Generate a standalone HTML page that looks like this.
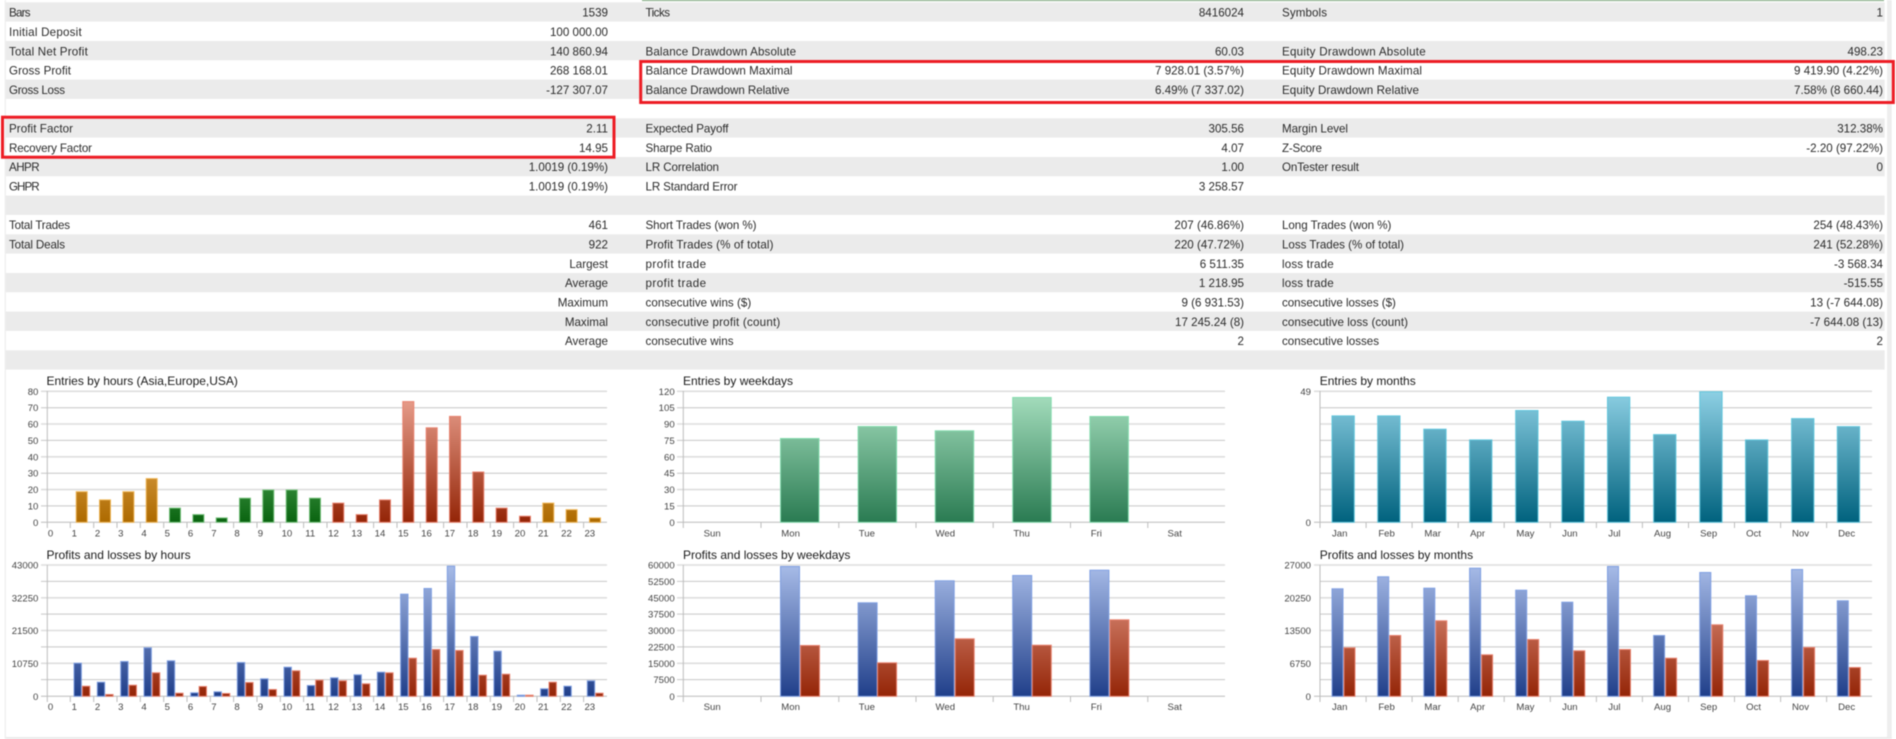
<!DOCTYPE html>
<html><head><meta charset="utf-8"><title>Report</title>
<style>
html,body{margin:0;padding:0;background:#fff;width:1896px;height:739px;overflow:hidden}
svg{display:block;filter:blur(.4px)}
.t text{font:11.6px "Liberation Sans",Arial,sans-serif;fill:#2b2b2b}
.t .r{text-anchor:end}
.h{font:12px "Liberation Sans",Arial,sans-serif;fill:#1a1a1a}
.a text{font:9.6px "Liberation Sans",Arial,sans-serif;fill:#444}
.a .r{text-anchor:end}
.a .c{text-anchor:middle}
.g1{stroke:#c6c6c6;stroke-width:1;fill:none}
.g2{stroke:#dedede;stroke-width:1.6;fill:none}
.ax{stroke:#bcbcbc;stroke-width:1;fill:none}
</style></head><body>
<svg width="1896" height="739" viewBox="0 0 1896 739" xmlns="http://www.w3.org/2000/svg">
<defs>
<linearGradient id="go" gradientUnits="userSpaceOnUse" x1="0" y1="391" x2="0" y2="522"><stop offset="0" stop-color="#ffc87d"/><stop offset="1" stop-color="#ad6a00"/></linearGradient>
<linearGradient id="gg" gradientUnits="userSpaceOnUse" x1="0" y1="391" x2="0" y2="522"><stop offset="0" stop-color="#90e098"/><stop offset="1" stop-color="#0a6410"/></linearGradient>
<linearGradient id="gr" gradientUnits="userSpaceOnUse" x1="0" y1="391" x2="0" y2="522"><stop offset="0" stop-color="#eca594"/><stop offset="1" stop-color="#942507"/></linearGradient>
<linearGradient id="gs" gradientUnits="userSpaceOnUse" x1="0" y1="391" x2="0" y2="522"><stop offset="0" stop-color="#a8e0c0"/><stop offset="1" stop-color="#2a7b52"/></linearGradient>
<linearGradient id="gc" gradientUnits="userSpaceOnUse" x1="0" y1="391" x2="0" y2="522"><stop offset="0" stop-color="#8ed0e4"/><stop offset="1" stop-color="#00627e"/></linearGradient>
<linearGradient id="gb" gradientUnits="userSpaceOnUse" x1="0" y1="565" x2="0" y2="696"><stop offset="0" stop-color="#a8bce8"/><stop offset="1" stop-color="#203f8a"/></linearGradient>
<linearGradient id="gd" gradientUnits="userSpaceOnUse" x1="0" y1="565" x2="0" y2="696"><stop offset="0" stop-color="#eca594"/><stop offset="1" stop-color="#942507"/></linearGradient>
</defs>

<!-- frame -->
<rect x="4.8" y="0" width="1" height="739" fill="#ececec"/>
<rect x="1887" y="0" width="4.7" height="739" fill="#eeeeee"/>
<rect x="5.7" y="737" width="1886" height="2" fill="#ebebeb"/>
<rect x="642" y="0" width="1242" height="1" fill="#76a276"/>

<!-- table rows -->
<g fill="#ebebeb">
<rect x="5.7" y="2.3" width="1879" height="19.3"/>
<rect x="5.7" y="41" width="1879" height="19.3"/>
<rect x="5.7" y="79.6" width="1879" height="19.3"/>
<rect x="5.7" y="118.3" width="1879" height="19.3"/>
<rect x="5.7" y="157" width="1879" height="19.3"/>
<rect x="5.7" y="195.6" width="1879" height="19.3"/>
<rect x="5.7" y="234.3" width="1879" height="19.3"/>
<rect x="5.7" y="273" width="1879" height="19.3"/>
<rect x="5.7" y="311.6" width="1879" height="19.3"/>
<rect x="5.7" y="350.3" width="1879" height="19.3"/>
</g>

<g class="t">
<text x="9" y="16.6" textLength="21.6">Bars</text><text class="r" x="608" y="16.6">1539</text>
<text x="645.5" y="16.6" textLength="24.5">Ticks</text><text class="r" x="1244" y="16.6">8416024</text>
<text x="1282" y="16.6" textLength="45">Symbols</text><text class="r" x="1883" y="16.6">1</text>
<text x="9" y="35.9" textLength="72.7">Initial Deposit</text><text class="r" x="608" y="35.9">100 000.00</text>
<text x="9" y="55.3" textLength="78.8">Total Net Profit</text><text class="r" x="608" y="55.3">140 860.94</text>
<text x="645.5" y="55.3" textLength="150.6">Balance Drawdown Absolute</text><text class="r" x="1244" y="55.3">60.03</text>
<text x="1282" y="55.3" textLength="143.7">Equity Drawdown Absolute</text><text class="r" x="1883" y="55.3">498.23</text>
<text x="9" y="74.6" textLength="62">Gross Profit</text><text class="r" x="608" y="74.6">268 168.01</text>
<text x="645.5" y="74.6" textLength="147">Balance Drawdown Maximal</text><text class="r" x="1244" y="74.6">7 928.01 (3.57%)</text>
<text x="1282" y="74.6" textLength="140">Equity Drawdown Maximal</text><text class="r" x="1883" y="74.6">9 419.90 (4.22%)</text>
<text x="9" y="93.9" textLength="56">Gross Loss</text><text class="r" x="608" y="93.9">-127 307.07</text>
<text x="645.5" y="93.9" textLength="144">Balance Drawdown Relative</text><text class="r" x="1244" y="93.9">6.49% (7 337.02)</text>
<text x="1282" y="93.9" textLength="137">Equity Drawdown Relative</text><text class="r" x="1883" y="93.9">7.58% (8 660.44)</text>
<text x="9" y="132.6" textLength="64">Profit Factor</text><text class="r" x="608" y="132.6">2.11</text>
<text x="645.5" y="132.6" textLength="83">Expected Payoff</text><text class="r" x="1244" y="132.6">305.56</text>
<text x="1282" y="132.6" textLength="66">Margin Level</text><text class="r" x="1883" y="132.6">312.38%</text>
<text x="9" y="151.9" textLength="83">Recovery Factor</text><text class="r" x="608" y="151.9">14.95</text>
<text x="645.5" y="151.9" textLength="66.5">Sharpe Ratio</text><text class="r" x="1244" y="151.9">4.07</text>
<text x="1282" y="151.9" textLength="40">Z-Score</text><text class="r" x="1883" y="151.9">-2.20 (97.22%)</text>
<text x="9" y="171.2" textLength="30.6">AHPR</text><text class="r" x="608" y="171.2">1.0019 (0.19%)</text>
<text x="645.5" y="171.2" textLength="73.5">LR Correlation</text><text class="r" x="1244" y="171.2">1.00</text>
<text x="1282" y="171.2" textLength="77">OnTester result</text><text class="r" x="1883" y="171.2">0</text>
<text x="9" y="190.6" textLength="30.6">GHPR</text><text class="r" x="608" y="190.6">1.0019 (0.19%)</text>
<text x="645.5" y="190.6" textLength="92">LR Standard Error</text><text class="r" x="1244" y="190.6">3 258.57</text>
<text x="9" y="229.2" textLength="61">Total Trades</text><text class="r" x="608" y="229.2">461</text>
<text x="645.5" y="229.2" textLength="111">Short Trades (won %)</text><text class="r" x="1244" y="229.2">207 (46.86%)</text>
<text x="1282" y="229.2" textLength="109.4">Long Trades (won %)</text><text class="r" x="1883" y="229.2">254 (48.43%)</text>
<text x="9" y="248.6" textLength="56">Total Deals</text><text class="r" x="608" y="248.6">922</text>
<text x="645.5" y="248.6" textLength="128">Profit Trades (% of total)</text><text class="r" x="1244" y="248.6">220 (47.72%)</text>
<text x="1282" y="248.6" textLength="122">Loss Trades (% of total)</text><text class="r" x="1883" y="248.6">241 (52.28%)</text>
<text class="r" x="608" y="267.9">Largest</text>
<text x="645.5" y="267.9" textLength="60.6">profit trade</text><text class="r" x="1244" y="267.9">6 511.35</text>
<text x="1282" y="267.9" textLength="51.7">loss trade</text><text class="r" x="1883" y="267.9">-3 568.34</text>
<text class="r" x="608" y="287.2">Average</text>
<text x="645.5" y="287.2" textLength="60.6">profit trade</text><text class="r" x="1244" y="287.2">1 218.95</text>
<text x="1282" y="287.2" textLength="51.7">loss trade</text><text class="r" x="1883" y="287.2">-515.55</text>
<text class="r" x="608" y="306.6">Maximum</text>
<text x="645.5" y="306.6" textLength="105.8">consecutive wins ($)</text><text class="r" x="1244" y="306.6">9 (6 931.53)</text>
<text x="1282" y="306.6" textLength="113.9">consecutive losses ($)</text><text class="r" x="1883" y="306.6">13 (-7 644.08)</text>
<text class="r" x="608" y="325.9">Maximal</text>
<text x="645.5" y="325.9" textLength="134.8">consecutive profit (count)</text><text class="r" x="1244" y="325.9">17 245.24 (8)</text>
<text x="1282" y="325.9" textLength="126">consecutive loss (count)</text><text class="r" x="1883" y="325.9">-7 644.08 (13)</text>
<text class="r" x="608" y="345.2">Average</text>
<text x="645.5" y="345.2" textLength="88">consecutive wins</text><text class="r" x="1244" y="345.2">2</text>
<text x="1282" y="345.2" textLength="97">consecutive losses</text><text class="r" x="1883" y="345.2">2</text>
</g>

<!-- red highlight boxes -->
<rect x="2.5" y="117.2" width="611.5" height="40" fill="none" stroke="#ed1c24" stroke-width="3"/>
<rect x="640.7" y="61.5" width="1252.6" height="41" fill="none" stroke="#ed1c24" stroke-width="3"/>

<!-- grids: upper row -->
<path class="g2" d="M41 391.3H607M41 424H607M41 456.8H607M41 489.6H607"/>
<path class="g1" d="M41 407.7H607M41 440.4H607M41 473.2H607M41 505.9H607"/>
<path class="ax" d="M47.3 391V528M41 522.3H607M70.3 522V528M93.7 522V528M117 522V528M140.3 522V528M163.7 522V528M187 522V528M210.3 522V528M233.6 522V528M257 522V528M280.3 522V528M303.6 522V528M327 522V528M350.3 522V528M373.6 522V528M397 522V528M420.3 522V528M443.6 522V528M467 522V528M490.3 522V528M513.6 522V528M537 522V528M560.3 522V528M583.6 522V528"/>

<path class="g2" d="M677 391.3H1225M677 424H1225M677 456.8H1225M677 489.6H1225"/>
<path class="g1" d="M677 407.7H1225M677 440.4H1225M677 473.2H1225M677 505.9H1225"/>
<path class="ax" d="M683.3 391V528M677 522.3H1225M761 522V528M838.8 522V528M916 522V528M993.2 522V528M1070.5 522V528M1147.8 522V528"/>

<path class="g2" d="M1314 391.3H1872M1320 424H1872M1320 456.8H1872M1320 489.6H1872"/>
<path class="g1" d="M1320 407.7H1872M1320 440.4H1872M1320 473.2H1872M1320 505.9H1872"/>
<path class="ax" d="M1320 391V528M1314 522.3H1872M1366.1 522V528M1412.1 522V528M1458.2 522V528M1504.2 522V528M1550.3 522V528M1596.4 522V528M1642.4 522V528M1688.5 522V528M1734.5 522V528M1780.6 522V528M1826.6 522V528"/>

<!-- grids: lower row -->
<path class="g2" d="M41 565H607M41 597.8H607M41 630.5H607M41 663.3H607"/>
<path class="g1" d="M41 581.4H607M41 614.1H607M41 646.9H607M41 679.6H607"/>
<path class="ax" d="M47.3 565V702M41 696.3H607M70.3 696V702M93.7 696V702M117 696V702M140.3 696V702M163.7 696V702M187 696V702M210.3 696V702M233.6 696V702M257 696V702M280.3 696V702M303.6 696V702M327 696V702M350.3 696V702M373.6 696V702M397 696V702M420.3 696V702M443.6 696V702M467 696V702M490.3 696V702M513.6 696V702M537 696V702M560.3 696V702M583.6 696V702"/>

<path class="g2" d="M677 565H1225M677 597.8H1225M677 630.5H1225M677 663.3H1225"/>
<path class="g1" d="M677 581.4H1225M677 614.1H1225M677 646.9H1225M677 679.6H1225"/>
<path class="ax" d="M683.3 565V702M677 696.3H1225M761 696V702M838.8 696V702M916 696V702M993.2 696V702M1070.5 696V702M1147.8 696V702"/>

<path class="g2" d="M1314 565H1872M1320 597.8H1872M1320 630.5H1872M1320 663.3H1872"/>
<path class="g1" d="M1320 581.4H1872M1320 614.1H1872M1320 646.9H1872M1320 679.6H1872"/>
<path class="ax" d="M1320 565V702M1314 696.3H1872M1366.1 696V702M1412.1 696V702M1458.2 696V702M1504.2 696V702M1550.3 696V702M1596.4 696V702M1642.4 696V702M1688.5 696V702M1734.5 696V702M1780.6 696V702M1826.6 696V702"/>

<!-- Entries by hours bars -->
<g fill="url(#go)" stroke="#eeb555">
<rect x="76.2" y="491.7" width="11" height="30.6"/>
<rect x="99.5" y="499.9" width="11" height="22.4"/>
<rect x="122.9" y="491.7" width="11" height="30.6"/>
<rect x="146.2" y="478.6" width="11" height="43.7"/>
<rect x="542.8" y="503.1" width="11" height="19.2"/>
<rect x="566.1" y="509.7" width="11" height="12.6"/>
<rect x="589.5" y="517.9" width="11" height="4.4"/>
</g>
<g fill="url(#gg)" stroke="#74c07a">
<rect x="169.5" y="508.1" width="11" height="14.2"/>
<rect x="192.9" y="514.6" width="11" height="7.7"/>
<rect x="216.2" y="517.9" width="11" height="4.4"/>
<rect x="239.5" y="498.2" width="11" height="24.1"/>
<rect x="262.8" y="490" width="11" height="32.3"/>
<rect x="286.2" y="490" width="11" height="32.3"/>
<rect x="309.5" y="498.2" width="11" height="24.1"/>
</g>
<g fill="url(#gr)" stroke="#e8826f">
<rect x="332.8" y="503.1" width="11" height="19.2"/>
<rect x="356.2" y="514.6" width="11" height="7.7"/>
<rect x="379.5" y="499.9" width="11" height="22.4"/>
<rect x="402.8" y="401.6" width="11" height="120.7"/>
<rect x="426.2" y="427.8" width="11" height="94.5"/>
<rect x="449.5" y="416.4" width="11" height="105.9"/>
<rect x="472.8" y="472" width="11" height="50.3"/>
<rect x="496.1" y="508.1" width="11" height="14.2"/>
<rect x="519.5" y="516.2" width="11" height="6.1"/>
</g>

<!-- Entries by weekdays bars -->
<g fill="url(#gs)" stroke="#84dcae">
<rect x="780.5" y="438.5" width="38.5" height="83.8"/>
<rect x="858.1" y="426.5" width="38.5" height="95.8"/>
<rect x="935.2" y="430.8" width="38.5" height="91.5"/>
<rect x="1012.7" y="397.5" width="38.5" height="124.8"/>
<rect x="1089.9" y="416.5" width="38.5" height="105.8"/>
</g>

<!-- Entries by months bars -->
<g fill="url(#gc)" stroke="#62c6dc">
<rect x="1332" y="415.9" width="22.3" height="106.4"/>
<rect x="1377.7" y="415.9" width="22.3" height="106.4"/>
<rect x="1423.8" y="429.2" width="22.3" height="93.1"/>
<rect x="1469.6" y="439.9" width="22.3" height="82.4"/>
<rect x="1515.7" y="410.5" width="22.3" height="111.8"/>
<rect x="1561.8" y="421.2" width="22.3" height="101.1"/>
<rect x="1607.5" y="397.2" width="22.3" height="125.1"/>
<rect x="1653.6" y="434.6" width="22.3" height="87.7"/>
<rect x="1699.8" y="391.8" width="22.3" height="130.5"/>
<rect x="1745.5" y="439.9" width="22.3" height="82.4"/>
<rect x="1791.6" y="418.6" width="22.3" height="103.7"/>
<rect x="1837.3" y="426.6" width="22.3" height="95.7"/>
</g>

<!-- P&L by hours blue -->
<g fill="url(#gb)" stroke="#7f9fe2">
<rect x="74" y="663.2" width="7.4" height="33.1"/>
<rect x="97.3" y="682.2" width="7.4" height="14.1"/>
<rect x="120.7" y="661.5" width="7.4" height="34.8"/>
<rect x="144" y="647.8" width="7.4" height="48.5"/>
<rect x="167.3" y="660.8" width="7.4" height="35.5"/>
<rect x="190.7" y="692.8" width="7.4" height="3.5"/>
<rect x="214" y="691.8" width="7.4" height="4.5"/>
<rect x="237.3" y="662.5" width="7.4" height="33.8"/>
<rect x="260.6" y="678.8" width="7.4" height="17.5"/>
<rect x="284" y="667.2" width="7.4" height="29.1"/>
<rect x="307.3" y="685.5" width="7.4" height="10.8"/>
<rect x="330.6" y="677.8" width="7.4" height="18.5"/>
<rect x="354" y="674.8" width="7.4" height="21.5"/>
<rect x="377.3" y="672.2" width="7.4" height="24.1"/>
<rect x="400.6" y="594.2" width="7.4" height="102.1"/>
<rect x="424" y="588.5" width="7.4" height="107.8"/>
<rect x="447.3" y="566.2" width="7.4" height="130.1"/>
<rect x="470.6" y="636.5" width="7.4" height="59.8"/>
<rect x="493.9" y="651.2" width="7.4" height="45.1"/>
<rect x="517.3" y="695.2" width="7.4" height="1.1"/>
<rect x="540.6" y="688.8" width="7.4" height="7.5"/>
<rect x="563.9" y="686.2" width="7.4" height="10.1"/>
<rect x="587.3" y="680.8" width="7.4" height="15.5"/>
</g>
<!-- P&L by hours red -->
<g fill="url(#gd)" stroke="#e8826f">
<rect x="82.4" y="686.2" width="7.4" height="10.1"/>
<rect x="105.7" y="694.5" width="7.4" height="1.8"/>
<rect x="129.1" y="685.2" width="7.4" height="11.1"/>
<rect x="152.4" y="672.8" width="7.4" height="23.5"/>
<rect x="175.7" y="693.2" width="7.4" height="3.1"/>
<rect x="199.1" y="686.5" width="7.4" height="9.8"/>
<rect x="222.4" y="693.5" width="7.4" height="2.8"/>
<rect x="245.7" y="682.5" width="7.4" height="13.8"/>
<rect x="269" y="689.5" width="7.4" height="6.8"/>
<rect x="292.4" y="670.8" width="7.4" height="25.5"/>
<rect x="315.7" y="680.2" width="7.4" height="16.1"/>
<rect x="339" y="680.8" width="7.4" height="15.5"/>
<rect x="362.4" y="683.8" width="7.4" height="12.5"/>
<rect x="385.7" y="672.8" width="7.4" height="23.5"/>
<rect x="409" y="658.2" width="7.4" height="38.1"/>
<rect x="432.4" y="649.5" width="7.4" height="46.8"/>
<rect x="455.7" y="650.5" width="7.4" height="45.8"/>
<rect x="479" y="675.2" width="7.4" height="21.1"/>
<rect x="502.3" y="674.2" width="7.4" height="22.1"/>
<rect x="525.7" y="695.2" width="7.4" height="1.1"/>
<rect x="549" y="682.2" width="7.4" height="14.1"/>
<rect x="595.7" y="693.2" width="7.4" height="3.1"/>
</g>

<!-- P&L by weekdays -->
<g fill="url(#gb)" stroke="#7f9fe2">
<rect x="780.5" y="566.5" width="19" height="129.8"/>
<rect x="858.1" y="602.8" width="19" height="93.5"/>
<rect x="935.2" y="580.8" width="19" height="115.5"/>
<rect x="1012.7" y="575.5" width="19" height="120.8"/>
<rect x="1089.9" y="570.2" width="19" height="126.1"/>
</g>
<g fill="url(#gd)" stroke="#e8826f">
<rect x="800.5" y="645.5" width="19" height="50.8"/>
<rect x="877.6" y="662.8" width="19" height="33.5"/>
<rect x="955.2" y="638.8" width="19" height="57.5"/>
<rect x="1032.3" y="645.2" width="19" height="51.1"/>
<rect x="1109.9" y="619.8" width="19" height="76.5"/>
</g>

<!-- P&L by months -->
<g fill="url(#gb)" stroke="#7f9fe2">
<rect x="1332" y="588.8" width="11" height="107.5"/>
<rect x="1377.7" y="576.8" width="11" height="119.5"/>
<rect x="1423.8" y="588.2" width="11" height="108.1"/>
<rect x="1469.6" y="568.2" width="11" height="128.1"/>
<rect x="1515.7" y="590.2" width="11" height="106.1"/>
<rect x="1561.8" y="602.2" width="11" height="94.1"/>
<rect x="1607.5" y="566.5" width="11" height="129.8"/>
<rect x="1653.6" y="635.5" width="11" height="60.8"/>
<rect x="1699.8" y="572.5" width="11" height="123.8"/>
<rect x="1745.5" y="595.8" width="11" height="100.5"/>
<rect x="1791.6" y="569.5" width="11" height="126.8"/>
<rect x="1837.3" y="600.8" width="11" height="95.5"/>
</g>
<g fill="url(#gd)" stroke="#e8826f">
<rect x="1344" y="647.8" width="11" height="48.5"/>
<rect x="1389.7" y="635.5" width="11" height="60.8"/>
<rect x="1435.8" y="620.8" width="11" height="75.5"/>
<rect x="1481.6" y="654.8" width="11" height="41.5"/>
<rect x="1527.7" y="639.5" width="11" height="56.8"/>
<rect x="1573.8" y="650.8" width="11" height="45.5"/>
<rect x="1619.5" y="649.5" width="11" height="46.8"/>
<rect x="1665.6" y="658.2" width="11" height="38.1"/>
<rect x="1711.8" y="624.8" width="11" height="71.5"/>
<rect x="1757.5" y="660.5" width="11" height="35.8"/>
<rect x="1803.6" y="647.5" width="11" height="48.8"/>
<rect x="1849.3" y="667.5" width="11" height="28.8"/>
</g>

<!-- titles -->
<text class="h" x="46.5" y="385">Entries by hours (Asia,Europe,USA)</text>
<text class="h" x="683" y="385">Entries by weekdays</text>
<text class="h" x="1319.7" y="385">Entries by months</text>
<text class="h" x="46.5" y="559">Profits and losses by hours</text>
<text class="h" x="683" y="559">Profits and losses by weekdays</text>
<text class="h" x="1319.7" y="559">Profits and losses by months</text>

<!-- axis labels -->
<g class="a">
<text class="r" x="38.4" y="394.8">80</text><text class="r" x="38.4" y="411.2">70</text><text class="r" x="38.4" y="427.5">60</text><text class="r" x="38.4" y="443.9">50</text><text class="r" x="38.4" y="460.3">40</text><text class="r" x="38.4" y="476.7">30</text><text class="r" x="38.4" y="493.1">20</text><text class="r" x="38.4" y="509.4">10</text><text class="r" x="38.4" y="525.8">0</text>
<text class="c" x="50.6" y="536.7">0</text><text class="c" x="74.3" y="536.7">1</text><text class="c" x="97.6" y="536.7">2</text><text class="c" x="120.8" y="536.7">3</text><text class="c" x="144.1" y="536.7">4</text><text class="c" x="167.3" y="536.7">5</text><text class="c" x="190.6" y="536.7">6</text><text class="c" x="213.9" y="536.7">7</text><text class="c" x="237.1" y="536.7">8</text><text class="c" x="260.4" y="536.7">9</text><text class="c" x="286.9" y="536.7">10</text><text class="c" x="310.2" y="536.7">11</text><text class="c" x="333.5" y="536.7">12</text><text class="c" x="356.7" y="536.7">13</text><text class="c" x="380" y="536.7">14</text><text class="c" x="403.3" y="536.7">15</text><text class="c" x="426.5" y="536.7">16</text><text class="c" x="449.8" y="536.7">17</text><text class="c" x="473.1" y="536.7">18</text><text class="c" x="496.7" y="536.7">19</text><text class="c" x="520" y="536.7">20</text><text class="c" x="543.3" y="536.7">21</text><text class="c" x="566.5" y="536.7">22</text><text class="c" x="589.8" y="536.7">23</text>

<text class="r" x="674.7" y="394.8">120</text><text class="r" x="674.7" y="411.2">105</text><text class="r" x="674.7" y="427.5">90</text><text class="r" x="674.7" y="443.9">75</text><text class="r" x="674.7" y="460.3">60</text><text class="r" x="674.7" y="476.7">45</text><text class="r" x="674.7" y="493.1">30</text><text class="r" x="674.7" y="509.4">15</text><text class="r" x="674.7" y="525.8">0</text>
<text class="c" x="712.2" y="536.7">Sun</text><text class="c" x="790.6" y="536.7">Mon</text><text class="c" x="866.9" y="536.7">Tue</text><text class="c" x="945.3" y="536.7">Wed</text><text class="c" x="1021.6" y="536.7">Thu</text><text class="c" x="1096.3" y="536.7">Fri</text><text class="c" x="1174.7" y="536.7">Sat</text>

<text class="r" x="1311" y="394.8">49</text><text class="r" x="1311" y="525.8">0</text>
<text class="c" x="1339.7" y="536.7">Jan</text><text class="c" x="1386.6" y="536.7">Feb</text><text class="c" x="1432.7" y="536.7">Mar</text><text class="c" x="1477.6" y="536.7">Apr</text><text class="c" x="1525.4" y="536.7">May</text><text class="c" x="1569.9" y="536.7">Jun</text><text class="c" x="1614.4" y="536.7">Jul</text><text class="c" x="1662.5" y="536.7">Aug</text><text class="c" x="1708.7" y="536.7">Sep</text><text class="c" x="1753.6" y="536.7">Oct</text><text class="c" x="1800.5" y="536.7">Nov</text><text class="c" x="1846.6" y="536.7">Dec</text>

<text class="r" x="38.4" y="568.5">43000</text><text class="r" x="38.4" y="601.3">32250</text><text class="r" x="38.4" y="634">21500</text><text class="r" x="38.4" y="666.8">10750</text><text class="r" x="38.4" y="699.8">0</text>
<text class="c" x="50.6" y="710">0</text><text class="c" x="74.3" y="710">1</text><text class="c" x="97.6" y="710">2</text><text class="c" x="120.8" y="710">3</text><text class="c" x="144.1" y="710">4</text><text class="c" x="167.3" y="710">5</text><text class="c" x="190.6" y="710">6</text><text class="c" x="213.9" y="710">7</text><text class="c" x="237.1" y="710">8</text><text class="c" x="260.4" y="710">9</text><text class="c" x="286.9" y="710">10</text><text class="c" x="310.2" y="710">11</text><text class="c" x="333.5" y="710">12</text><text class="c" x="356.7" y="710">13</text><text class="c" x="380" y="710">14</text><text class="c" x="403.3" y="710">15</text><text class="c" x="426.5" y="710">16</text><text class="c" x="449.8" y="710">17</text><text class="c" x="473.1" y="710">18</text><text class="c" x="496.7" y="710">19</text><text class="c" x="520" y="710">20</text><text class="c" x="543.3" y="710">21</text><text class="c" x="566.5" y="710">22</text><text class="c" x="589.8" y="710">23</text>

<text class="r" x="674.7" y="568.5">60000</text><text class="r" x="674.7" y="584.9">52500</text><text class="r" x="674.7" y="601.3">45000</text><text class="r" x="674.7" y="617.6">37500</text><text class="r" x="674.7" y="634">30000</text><text class="r" x="674.7" y="650.4">22500</text><text class="r" x="674.7" y="666.8">15000</text><text class="r" x="674.7" y="683.1">7500</text><text class="r" x="674.7" y="699.8">0</text>
<text class="c" x="712.2" y="710">Sun</text><text class="c" x="790.6" y="710">Mon</text><text class="c" x="866.9" y="710">Tue</text><text class="c" x="945.3" y="710">Wed</text><text class="c" x="1021.6" y="710">Thu</text><text class="c" x="1096.3" y="710">Fri</text><text class="c" x="1174.7" y="710">Sat</text>

<text class="r" x="1311" y="568.5">27000</text><text class="r" x="1311" y="601.3">20250</text><text class="r" x="1311" y="634">13500</text><text class="r" x="1311" y="666.8">6750</text><text class="r" x="1311" y="699.8">0</text>
<text class="c" x="1339.7" y="710">Jan</text><text class="c" x="1386.6" y="710">Feb</text><text class="c" x="1432.7" y="710">Mar</text><text class="c" x="1477.6" y="710">Apr</text><text class="c" x="1525.4" y="710">May</text><text class="c" x="1569.9" y="710">Jun</text><text class="c" x="1614.4" y="710">Jul</text><text class="c" x="1662.5" y="710">Aug</text><text class="c" x="1708.7" y="710">Sep</text><text class="c" x="1753.6" y="710">Oct</text><text class="c" x="1800.5" y="710">Nov</text><text class="c" x="1846.6" y="710">Dec</text>
</g>
</svg>
</body></html>
